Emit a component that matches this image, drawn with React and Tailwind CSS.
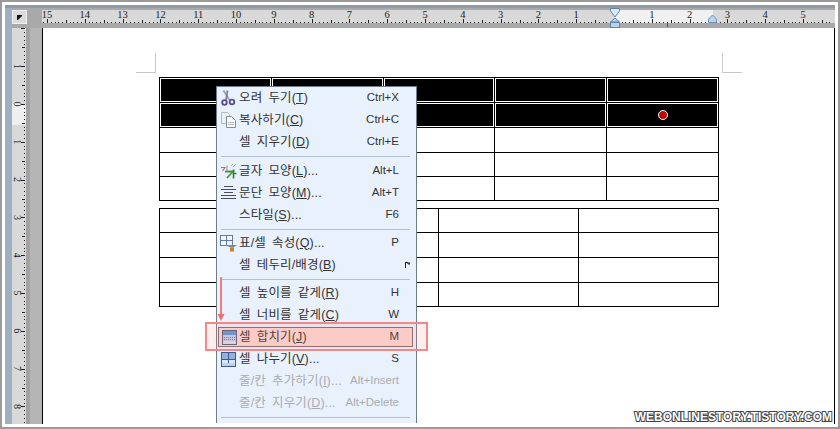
import React from 'react';

const CM = 37.8;
const ORIGIN_X = 572; // zero of the top ruler, relative to the ruler svg
const ORIGIN_Y = 76; // zero of the side ruler, relative to the ruler svg

const ScissorsIcon = () => (
  <svg width="15" height="16" viewBox="0 0 15 16" fill="none">
    <path d="M2.5 0.5 L8.5 10" stroke="#9a9fa8" strokeWidth="1.7" />
    <path d="M6.5 0.5 L5 10" stroke="#7b808a" strokeWidth="1.7" />
    <circle cx="3.5" cy="12.5" r="2.3" stroke="#5d4a94" strokeWidth="1.8" />
    <circle cx="11" cy="12" r="2.3" stroke="#5d4a94" strokeWidth="1.8" />
  </svg>
);

const CopyIcon = () => (
  <svg width="16" height="16" viewBox="0 0 16 16" fill="none">
    <path d="M0.5 0.5 H6.5 L8.5 2.5 V11.5 H0.5 Z" fill="#eef1f4" stroke="#b3bac2" />
    <path d="M5.5 4.5 H10.5 L14.5 8.5 V15.5 H5.5 Z" fill="#fbfcfd" stroke="#838d99" />
    <path d="M7 10.5 H13 M7 12.5 H13" stroke="#b4bbc3" />
  </svg>
);

const FontIcon = () => (
  <svg width="16" height="16" viewBox="0 0 16 16" fill="none">
    <path d="M0 4.5 H4 L1.5 8" stroke="#c2677a" strokeWidth="1.2" />
    <path d="M6 2.5 V7" stroke="#b58a8f" strokeWidth="1.1" />
    <path d="M10 3 L12 1 M12 4 L15 1" stroke="#b9a56e" strokeWidth="1" />
    <path d="M4 8.5 H12 L6 15" stroke="#4c9447" strokeWidth="1.8" />
    <path d="M12.5 6.5 V15.5 M12.5 10.5 H15.5" stroke="#3b8238" strokeWidth="1.7" />
  </svg>
);

const ParagraphIcon = () => (
  <svg width="15" height="14" viewBox="0 0 15 14" fill="none">
    <path d="M3 0.5 H12 M0 3.5 H15 M3 6.5 H12 M0 9.5 H15 M0 12.5 H15" stroke="#4a4e54" />
  </svg>
);

const TablePropsIcon = () => (
  <svg width="18" height="17" viewBox="0 0 18 17" fill="none">
    <rect x="0.5" y="0.5" width="12" height="10" fill="#f2f6fb" stroke="#5f7ba6" />
    <path d="M6.5 1 V10 M1 5.5 H12" stroke="#5f7ba6" />
    <path d="M5 10 H17 L13.5 12.5 H10.5 Z" fill="#80868e" />
    <rect x="10" y="12.5" width="4" height="4" fill="#b8892f" />
  </svg>
);

const MergeIcon = () => (
  <svg width="15" height="15" viewBox="0 0 15 15" fill="none">
    <rect x="0.5" y="0.5" width="14" height="14" fill="#b9d2ee" stroke="#4d5f7c" />
    <rect x="1" y="1" width="13" height="4" fill="#5f92d0" />
    <path d="M2 7.5 H13 M2 9.5 H13" stroke="#5f7fa8" strokeDasharray="1 1" />
    <rect x="1" y="11" width="13" height="3" fill="#e4d9d6" />
  </svg>
);

const SplitIcon = () => (
  <svg width="15" height="15" viewBox="0 0 15 15" fill="none">
    <rect x="0.5" y="0.5" width="14" height="14" fill="#dbe8f7" stroke="#3d5c8c" />
    <rect x="1" y="1" width="6" height="6" fill="#8fb3de" />
    <rect x="8" y="1" width="6" height="6" fill="#8fb3de" />
    <path d="M7.5 1 V14 M1 7.5 H14" stroke="#3d5c8c" />
    <rect x="1" y="11" width="13" height="3" fill="#c5d2e2" />
  </svg>
);

const SubmenuMark = () => (
  <svg width="5" height="6" viewBox="0 0 5 6">
    <path d="M0.5 0 V6 M0.5 0.5 H3 M3 1 H5 V2 H3 Z" stroke="#222" strokeWidth="1" fill="none" />
  </svg>
);

const Hourglass = () => (
  <g stroke="#5f86b0" fill="#bcd3ea">
    <path d="M568.5 0.5 H577.5 V3 L573 9 L568.5 3 Z" fill="#dce8f3" />
    <path d="M573 10 L577.5 14 H568.5 Z" />
    <rect x="568.5" y="14.5" width="9" height="5" />
  </g>
);

const TopRuler = () => {
  const ticks = Array.from({ length: 210 }, (_, i) => i - 152);
  const labels = Array.from({ length: 21 }, (_, i) => i - 15);
  return (
    <svg width="793" height="20" className="block" fontFamily="'Liberation Serif', serif">
      <rect x="0" y="2" width="793" height="13" fill="#d9d9d9" />
      <rect x="572" y="2" width="99" height="13" fill="#f1f1f1" />
      {ticks.map((t) => {
        const x = Math.round(ORIGIN_X + (t * CM) / 10);
        const len = t % 10 === 0 ? 4 : t % 5 === 0 ? 3 : 1;
        return <rect key={t} x={x} y={15 - len} width="1" height={len} fill="#222" />;
      })}
      {labels.map((n) =>
        n === 0 ? null : (
          <text key={n} x={ORIGIN_X + n * CM} y="10" fontSize="10.5" textAnchor="middle" fill="#222">
            {Math.abs(n)}
          </text>
        ),
      )}
      <rect x="625" y="15" width="1" height="4" fill="#555" />
      <Hourglass />
      <path d="M666.5 14.5 V11 L670.5 7 L674.5 11 V14.5 Z" fill="#bcd3ea" stroke="#6f93b8" />
    </svg>
  );
};

const SideRuler = () => {
  const ticks = Array.from({ length: 106 }, (_, i) => i - 20);
  const labels = [-1, 0, 1, 2, 3, 4, 5, 6, 7, 8];
  return (
    <svg width="30" height="396" className="block" fontFamily="'Liberation Serif', serif">
      <rect x="0" y="0" width="14" height="396" fill="#d9d9d9" />
      <rect x="14" y="0" width="4" height="396" fill="#a2a2a2" />
      <rect x="18" y="0" width="12" height="396" fill="#b5b5b5" />
      <rect x="0" y="76" width="14" height="21" fill="#efefef" />
      {ticks.map((t) => {
        const y = Math.round(ORIGIN_Y + (t * CM) / 10);
        const len = t % 10 === 0 ? 4 : t % 5 === 0 ? 3 : 1;
        return <rect key={t} x={13 - len} y={y} width={len} height="1" fill="#222" />;
      })}
      {labels.map((n) => {
        const y = ORIGIN_Y + n * CM;
        return (
          <text
            key={n}
            x="4"
            y={y}
            fontSize="10"
            textAnchor="middle"
            fill="#222"
            transform={`rotate(90 4 ${y})`}
            dominantBaseline="middle"
          >
            {Math.abs(n)}
          </text>
        );
      })}
    </svg>
  );
};

const Sep = ({ tall }) => (
  <div className={`flex items-center ml-[4px] mr-[6px] ${tall ? 'h-[7px]' : 'h-[6px]'}`}>
    <div className="h-px w-full bg-[#b3c1cf]" />
  </div>
);

const MenuItem = ({ icon, text, hot, after = ')', tail = '', shortcut, sub, disabled, active }) => {
  const color = disabled ? 'text-[#a9adb2]' : 'text-[#333]';
  return (
    <div
      className={
        active
          ? 'flex items-center h-[20px] my-[1px] ml-[1px] mr-[3px] pr-[13px] border border-[#7d6a6a] bg-[#fbd6d2]'
          : `flex items-center h-[22px] pl-[1px] ${sub ? 'pr-[6px]' : 'pr-[17px]'}`
      }
    >
      <span className={`flex items-center justify-center shrink-0 ${active ? 'w-[20px]' : 'w-[21px]'}`}>{icon}</span>
      <span className={`flex-1 whitespace-nowrap text-[12.5px] tracking-[0.15px] [word-spacing:2.5px] ${color}`}>
        {text}
        {hot && <span className="underline">{hot}</span>}
        {hot && after}
        {tail}
      </span>
      {sub ? <SubmenuMark /> : <span className={`text-[11.5px] whitespace-nowrap ${color}`}>{shortcut}</span>}
    </div>
  );
};

const Menu = () => (
  <div className="absolute left-[214px] top-[84px] w-[201px] h-[337px] bg-[#e9f1fd] border-t border-x border-[#6f7c8a] font-['Liberation_Sans','Noto_Sans_CJK_KR',sans-serif]">
    <MenuItem icon={<ScissorsIcon />} text="오려 두기(" hot="T" shortcut="Ctrl+X" />
    <MenuItem icon={<CopyIcon />} text="복사하기(" hot="C" shortcut="Ctrl+C" />
    <MenuItem text="셀 지우기(" hot="D" shortcut="Ctrl+E" />
    <Sep tall />
    <MenuItem icon={<FontIcon />} text="글자 모양(" hot="L" tail="..." shortcut="Alt+L" />
    <MenuItem icon={<ParagraphIcon />} text="문단 모양(" hot="M" tail="..." shortcut="Alt+T" />
    <MenuItem text="스타일(" hot="S" tail="..." shortcut="F6" />
    <Sep />
    <MenuItem icon={<TablePropsIcon />} text="표/셀 속성(" hot="Q" tail="..." shortcut="P" />
    <MenuItem text="셀 테두리/배경(" hot="B" sub />
    <Sep />
    <MenuItem text="셀 높이를 같게(" hot="R" shortcut="H" />
    <MenuItem text="셀 너비를 같게(" hot="C" shortcut="W" />
    <MenuItem icon={<MergeIcon />} text="셀 합치기(" hot="J" shortcut="M" active />
    <MenuItem icon={<SplitIcon />} text="셀 나누기(" hot="V" tail="..." shortcut="S" />
    <MenuItem text="줄/칸 추가하기(" hot="I" tail="..." shortcut="Alt+Insert" disabled />
    <MenuItem text="줄/칸 지우기(" hot="D" tail="..." shortcut="Alt+Delete" disabled />
    <Sep />
  </div>
);

const BlackCell = ({ dot }) => (
  <div className="border-r border-b border-black p-px">
    <div className="h-full bg-black flex items-center justify-center">
      {dot && <div className="w-[10px] h-[10px] rounded-full bg-[#c40000] border border-white" />}
    </div>
  </div>
);

const Cell = () => <div className="border-r border-b border-black" />;

const App = () => {
  return (
    <div className="relative w-[840px] h-[429px] p-[3px] bg-white border-2 border-[#9b9b9b] overflow-hidden">
      <div className="flex flex-col h-full">
        <div className="h-[3px] shrink-0 bg-[#8e9ba8]" />
        <div className="flex flex-1 min-h-0">
          <div className="w-[7px] shrink-0 bg-[#9fb0c0]" />
          <div className="flex flex-col flex-1 min-w-0">
            {/* ruler row */}
            <div className="flex h-[20px] shrink-0 bg-[#a9a9a9]">
              <div className="w-[30px] shrink-0">
                <div className="flex items-center justify-center w-[15px] h-[14px] mt-[2px] bg-[#dcdcdc] border border-[#eeeeee]">
                  <svg width="5" height="5" viewBox="0 0 5 5">
                    <path d="M0 0 H5 V1 L1 5 H0 Z" fill="#111" />
                  </svg>
                </div>
              </div>
              <TopRuler />
            </div>
            {/* document area */}
            <div className="flex flex-1 min-h-0">
              <div className="w-[30px] shrink-0 overflow-hidden">
                <SideRuler />
              </div>
              <div className="relative flex-1 bg-white border-x border-black pt-[49px] pl-[116px]">
                <div className="absolute left-[93px] top-[25px] w-[20px] h-[20px] border-r border-b border-[#c8c8c8]" />
                <div className="absolute left-[679px] top-[25px] w-[20px] h-[20px] border-l border-b border-[#c8c8c8]" />

                <div className="grid w-[560px] grid-cols-[112px_112px_111px_112px_112px] grid-rows-[25px_25px_25px_24px_24px] border-t border-l border-black">
                  {[0, 1, 2, 3, 4].map((i) => (
                    <BlackCell key={`a${i}`} />
                  ))}
                  {[0, 1, 2, 3].map((i) => (
                    <BlackCell key={`b${i}`} />
                  ))}
                  <BlackCell dot />
                  {Array.from({ length: 15 }, (_, i) => (
                    <Cell key={`c${i}`} />
                  ))}
                </div>

                <div className="grid w-[560px] mt-[7px] grid-cols-[279px_140px_140px] grid-rows-[24px_25px_25px_24px] border-t border-l border-black">
                  {Array.from({ length: 12 }, (_, i) => (
                    <Cell key={`d${i}`} />
                  ))}
                </div>
              </div>
            </div>
          </div>
        </div>
      </div>

      <Menu />

      {/* red annotation over the screenshot */}
      <div className="absolute left-[203px] top-[320px] w-[223px] h-[29px] border-2 border-[#f08a8a] bg-[#ff8f8f]/15" />
      <svg className="absolute left-[215px] top-[275px]" width="8" height="45" viewBox="0 0 8 45">
        <path d="M4 0 V38" stroke="#ee7f7f" strokeWidth="2" />
        <path d="M0.5 37 H7.5 L4 44 Z" fill="#ee6f6f" />
      </svg>

      <div className="absolute right-[6px] bottom-[3px] text-[12px] font-bold leading-[14px] text-white font-['Liberation_Sans',sans-serif] [-webkit-text-stroke:2px_#444] [paint-order:stroke_fill]">
        WEBONLINESTORY.TISTORY.COM
      </div>
    </div>
  );
};

export default App;
